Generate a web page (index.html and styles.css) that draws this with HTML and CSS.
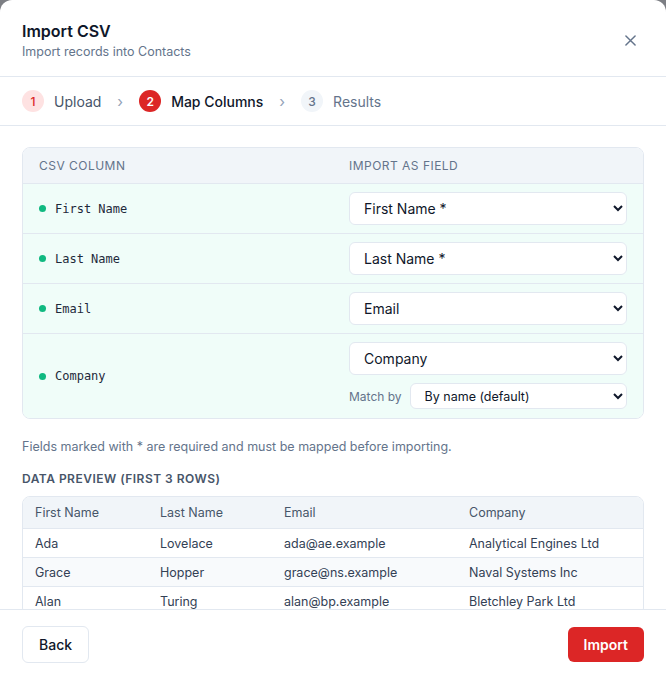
FILE: index.html
```html
<!DOCTYPE html>
<html lang="en">
<head>
  <meta charset="UTF-8">
  <meta name="viewport" content="width=device-width, initial-scale=1.0">
  <title>Import CSV</title>
  <link rel="stylesheet" href="styles.css">
</head>
<body>

  <div class="dialog">
    <!-- Header -->
    <div class="dialog-header">
      <div>
        <h1 class="title">Import CSV</h1>
        <p class="subtitle">Import records into Contacts</p>
      </div>
      <button class="close" aria-label="Close">
        <svg width="11" height="11" viewBox="0 0 12 12" fill="none" stroke="currentColor" stroke-width="1.6" stroke-linecap="round">
          <path d="M1 1l10 10M11 1L1 11"/>
        </svg>
      </button>
    </div>

    <!-- Steps -->
    <div class="steps">
      <div class="step done"><span class="step-num">1</span>Upload</div>
      <span class="step-sep">›</span>
      <div class="step active"><span class="step-num">2</span>Map Columns</div>
      <span class="step-sep">›</span>
      <div class="step"><span class="step-num">3</span>Results</div>
    </div>

    <!-- Body -->
    <div class="dialog-body">
      <div class="mapping">
        <div class="mapping-head">
          <div class="cell">CSV Column</div>
          <div class="cell">Import as field</div>
        </div>
        <div class="mapping-row">
          <div class="cell source"><span class="dot"></span>First Name</div>
          <div class="cell">
            <select class="field"><option>First Name *</option></select>
          </div>
        </div>
        <div class="mapping-row">
          <div class="cell source"><span class="dot"></span>Last Name</div>
          <div class="cell">
            <select class="field"><option>Last Name *</option></select>
          </div>
        </div>
        <div class="mapping-row">
          <div class="cell source"><span class="dot"></span>Email</div>
          <div class="cell">
            <select class="field"><option>Email</option></select>
          </div>
        </div>
        <div class="mapping-row">
          <div class="cell source"><span class="dot"></span>Company</div>
          <div class="cell stack">
            <select class="field"><option>Company</option></select>
            <div class="match">
              <label>Match by</label>
              <select class="field small"><option>By name (default)</option></select>
            </div>
          </div>
        </div>
      </div>

      <p class="note">Fields marked with * are required and must be mapped before importing.</p>

      <h2 class="section-title">Data preview (first 3 rows)</h2>
      <div class="preview">
        <table>
          <colgroup>
            <col style="width: 125px">
            <col style="width: 124px">
            <col style="width: 185px">
            <col>
          </colgroup>
          <thead>
            <tr><th>First Name</th><th>Last Name</th><th>Email</th><th>Company</th></tr>
          </thead>
          <tbody>
            <tr><td>Ada</td><td>Lovelace</td><td>ada@ae.example</td><td>Analytical Engines Ltd</td></tr>
            <tr><td>Grace</td><td>Hopper</td><td>grace@ns.example</td><td>Naval Systems Inc</td></tr>
            <tr><td>Alan</td><td>Turing</td><td>alan@bp.example</td><td>Bletchley Park Ltd</td></tr>
          </tbody>
        </table>
      </div>
    </div>

    <!-- Footer -->
    <div class="dialog-footer">
      <button class="btn">Back</button>
      <button class="btn primary">Import</button>
    </div>
  </div>

</body>
</html>
```

FILE: styles.css
```css
/* Page + backdrop */
body {
  margin: 0;
  background-color: #7d7f84;
  font-family: Inter, "Noto Sans", sans-serif;
  color: #0f172a;
}

.dialog {
  height: 100vh;
  display: flex;
  flex-direction: column;
  background-color: #fff;
  border-radius: 12px 12px 0 0;
  overflow: hidden;
}

/* Header */
.dialog-header {
  display: flex;
  justify-content: space-between;
  align-items: center;
  padding: 19px 22px 15px;
  border-bottom: 1px solid #e2e8f0;
}
.title {
  margin: 0;
  font-size: 16px;
  line-height: 24px;
  font-weight: 600;
  color: #0f172a;
}
.subtitle {
  margin: 0;
  font-size: 12.5px;
  line-height: 18px;
  color: #64748b;
}
.close {
  border: none;
  background: none;
  padding: 6px;
  margin-right: 2px;
  color: #64748b;
  cursor: pointer;
  display: flex;
}

/* Steps */
.steps {
  display: flex;
  align-items: center;
  gap: 16px;
  padding: 13px 22px;
  border-bottom: 1px solid #e2e8f0;
  font-size: 14px;
}
.step {
  display: flex;
  align-items: center;
  gap: 10px;
  color: #64748b;
}
.step-num {
  width: 22px;
  height: 22px;
  border-radius: 50%;
  display: flex;
  align-items: center;
  justify-content: center;
  font-size: 12px;
  font-weight: 500;
  background-color: #f1f5f9;
  color: #64748b;
}
.step.done { color: #475569; }
.step.done .step-num {
  background-color: #fee2e2;
  color: #dc2626;
}
.step.active {
  color: #0f172a;
  font-weight: 500;
}
.step.active .step-num {
  background-color: #dc2626;
  color: #fff;
  font-weight: 600;
}
.step-sep {
  color: #94a3b8;
  font-size: 15px;
}

/* Body */
.dialog-body {
  flex: 1;
  min-height: 0;
  overflow-y: auto;
  scrollbar-width: none;
  padding: 21px 22px;
}

/* Column mapping */
.mapping {
  border: 1px solid #e2e8f0;
  border-radius: 8px;
  overflow: hidden;
}
.mapping-head,
.mapping-row {
  display: grid;
  grid-template-columns: 1fr 1fr;
}
.mapping-head {
  height: 35px;
  align-items: center;
  background-color: #f1f5f9;
  font-size: 12px;
  letter-spacing: 0.04em;
  text-transform: uppercase;
  color: #64748b;
}
.mapping-row {
  background-color: #f0fdf9;
  border-top: 1px solid #e2e8f0;
  min-height: 49px;
  align-items: center;
}
.cell {
  padding: 0 16px;
}
.mapping-row .cell {
  padding: 8px 16px;
}
.mapping-row .stack {
  padding: 8px 16px 9px;
}
.source {
  display: flex;
  align-items: center;
  gap: 9px;
  font-family: "DejaVu Sans Mono", "Liberation Mono", monospace;
  font-size: 12px;
  color: #1e293b;
}
.dot {
  width: 7px;
  height: 7px;
  border-radius: 50%;
  background-color: #10b981;
}
.stack {
  display: flex;
  flex-direction: column;
  gap: 8px;
}
.field {
  width: 100%;
  height: 33px;
  padding: 0 10px;
  border: 1px solid #e2e8f0;
  border-radius: 6px;
  background-color: #fff;
  font-family: Inter, sans-serif;
  font-size: 14px;
  color: #0f172a;
}
.field.small {
  height: 26px;
  font-size: 12.5px;
  padding: 0 10px;
}
.match {
  display: flex;
  align-items: center;
  gap: 8px;
}
.match label {
  font-size: 12px;
  color: #64748b;
  white-space: nowrap;
}

/* Notes and preview */
.note {
  margin: 19px 0 0;
  font-size: 12.5px;
  line-height: 18px;
  color: #64748b;
}
.section-title {
  margin: 15px 0 9px;
  font-size: 12px;
  line-height: 16px;
  font-weight: 600;
  letter-spacing: 0.04em;
  text-transform: uppercase;
  color: #475569;
}
.preview {
  border: 1px solid #e2e8f0;
  border-radius: 8px;
  overflow: hidden;
}
.preview table {
  width: 100%;
  border-collapse: collapse;
  table-layout: fixed;
  font-size: 12.5px;
}
.preview th {
  height: 31px;
  padding: 0 12px;
  text-align: left;
  font-weight: 400;
  color: #475569;
  background-color: #f1f5f9;
}
.preview td {
  height: 28px;
  padding: 0 12px;
  color: #334155;
  border-top: 1px solid #e2e8f0;
}
.preview tbody tr:nth-child(even) td {
  background-color: #f8fafc;
}

/* Footer */
.dialog-footer {
  display: flex;
  justify-content: space-between;
  align-items: center;
  padding: 16px 22px;
  border-top: 1px solid #e2e8f0;
}
.btn {
  height: 37px;
  padding: 0 16px;
  border: 1px solid #e2e8f0;
  border-radius: 6px;
  background-color: #fff;
  font-family: Inter, sans-serif;
  font-size: 14px;
  font-weight: 500;
  color: #0f172a;
  cursor: pointer;
}
.btn.primary {
  height: 35px;
  border: none;
  background-color: #dc2626;
  color: #fff;
  font-weight: 600;
}
```
